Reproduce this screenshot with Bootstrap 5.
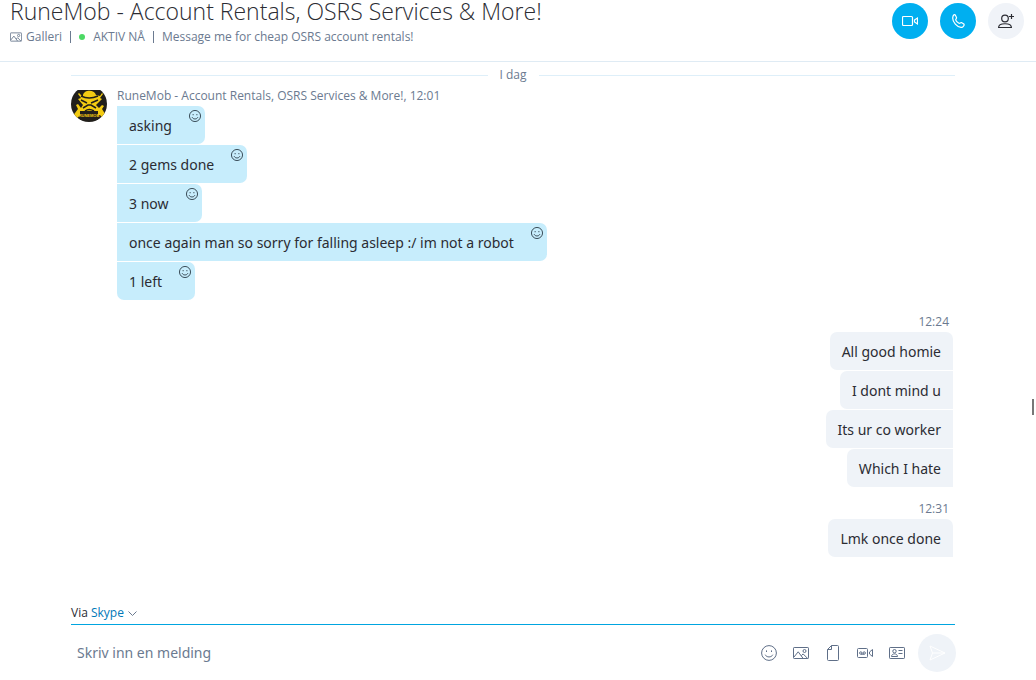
<!DOCTYPE html>
<html lang="nb">
<head>
<meta charset="utf-8">
<meta name="viewport" content="width=device-width, initial-scale=1">
<title>RuneMob - Skype</title>
<link rel="stylesheet" href="https://cdn.jsdelivr.net/npm/bootstrap@5.3.0/dist/css/bootstrap.min.css">
<style>
  body { font-family: "Noto Sans", "Open Sans", sans-serif; font-size: 14px; line-height: 20px; color: #2b2c33; background: #fff; }
  svg { display: block; fill: none; stroke: currentColor; }
  .muted { color: #6b7a90; }
  .meta { font-family: "Open Sans", sans-serif; font-size: 12px; line-height: 16px; }
  .topbar { height: 62px; border-bottom: 1px solid #dfebf4; padding: 0 12px 0 10px; }
  .chat-title { font-family: "Open Sans", sans-serif; font-size: 23px; line-height: 22px; font-weight: 300; margin: 0 0 7px; }
  .bar { width: 1px; height: 12px; margin: 0 8px; background: #6b7a90; }
  .online { width: 6px; height: 6px; background: #4cd964; }
  .calls { gap: 12px; padding-top: 3px; }
  .round-btn { width: 36px; height: 36px; border: 0; padding: 0; border-radius: 50%; background: #00aff0; color: #fff; display: grid; place-items: center; }
  .round-btn.pale { background: #f0f3f8; color: #2b2c33; }
  .column { margin: 0 81px 0 71px; }
  .day-row { margin-top: 5px; }
  .day-label { margin: 0 12px; }
  .day-line { height: 1px; background: #deeff9; }
  .incoming { margin-top: 3px; }
  .avatar { width: 36px; height: 36px; margin-right: 10px; }
  .author { padding: 2px 0; }
  .bubble { min-height: 38px; padding: 10px 12px 8px; position: relative; }
  .incoming .bubble { background: #c7edfc; padding-right: 33px; border-radius: 0 7px 7px 0; }
  .incoming .bubble:last-child { border-bottom-left-radius: 7px; }
  .outgoing { margin: 14px 2px 0 0; }
  .outgoing .meta { padding: 0 4px 2px 0; }
  .outgoing .bubble { background: #eff3f8; border-radius: 7px 0 0 7px; }
  .outgoing .bubble:first-child { border-top-right-radius: 7px; }
  .react { position: absolute; top: 4px; right: 4px; border: 0; padding: 0; background: none; color: #2b3c47; }
  .stack { gap: 1px; }
  .via { height: 24px; padding-top: 4px; border-bottom: 1px solid #00a5e0; }
  .via a { color: #0078b8; }
  .compose { height: 55px; }
  .compose input { border: 0; outline: 0; padding: 0 6px; background: none; min-width: 0; color: #2b2c33; }
  .compose input::placeholder { color: #6b7a90; opacity: 1; }
  .tool { width: 16px; border: 0; background: none; padding: 0; color: #5f6f88; }
  .tools { gap: 16px; }
  .send { width: 38px; height: 38px; background: #eff3f8; margin: 0 -1px 0 -3px; }
  .scroll-mark { position: absolute; right: 0; top: 399px; width: 4px; height: 16px; border-left: 2px solid #777; }
</style>
</head>
<body>
<svg class="d-none" aria-hidden="true">
  <symbol id="smile" viewBox="0 0 16 16"><circle cx="8" cy="8" r="7.4"/><path d="M5.5 5.4v1.6M10.5 5.4v1.6M4.2 9.7c1.3 3 6.3 3 7.6 0"/></symbol>
  <symbol id="picture" viewBox="0 0 16 14"><rect x=".5" y="1.5" width="15" height="11" rx=".7"/><path d="M1 11l4.2-5.2 5 6.7M8.3 9.7l1.8-1.8 4.6 4.6"/><circle cx="11.5" cy="5" r="1.5"/></symbol>
</svg>
<main class="vh-100 d-flex flex-column overflow-hidden position-relative">
  <header class="topbar d-flex justify-content-between flex-shrink-0">
    <div>
      <h1 class="chat-title text-nowrap">RuneMob - Account Rentals, OSRS Services &amp; More!</h1>
      <div class="meta muted d-flex align-items-center text-nowrap">
        <svg class="me-1" width="12" height="12" viewBox="0 0 16 14" stroke-width="1.2"><use href="#picture"/></svg>
        <a href="#" class="muted text-decoration-none">Galleri</a>
        <span class="bar"></span><span class="online rounded-circle me-2"></span>
        <span>AKTIV NÅ</span><span class="bar"></span>
        <span>Message me for cheap OSRS account rentals!</span>
      </div>
    </div>
    <div class="calls d-flex">
      <button class="round-btn" aria-label="Videosamtale"><svg width="16" height="12" viewBox="0 0 16 12" stroke-width="1.2"><rect x=".5" y="1.5" width="10" height="9" rx="1"/><path d="M12.5 5l3-2v6l-3-2z"/></svg></button>
      <button class="round-btn" aria-label="Lydsamtale"><svg width="14" height="14" viewBox="0 0 14 14" stroke-width="1.2"><path d="M2 2.300C2.300 1 3.500.200 4.300 1l1.200 2.500c.3.900-.8 1.400-.8 2.100.2 1.400 2.200 3.500 3.600 3.700.8 0 1.300-1 2.100-.7L12.800 10c.8.800 0 2.400-1.300 3.100C6.500 14.500.500 7.500 2 2.300z"/></svg></button>
      <button class="round-btn pale" aria-label="Legg til personer"><svg width="16" height="16" viewBox="0 0 16 16" stroke-width="1.2"><circle cx="7" cy="5.500" r="3.300"/><path d="M.6 14.500c0-5 12.800-5 12.800 0zM13.500 1v5M11 3.500h5"/></svg></button>
    </div>
  </header>

  <section class="column flex-grow-1 overflow-hidden" aria-label="Meldinger">
    <div class="day-row d-flex align-items-center meta muted">
      <span class="day-line flex-fill"></span><span class="day-label">I dag</span><span class="day-line flex-fill"></span>
    </div>
    <div class="incoming d-flex align-items-start">
      <svg class="avatar flex-shrink-0" viewBox="0 0 36 36" stroke="none" role="img" aria-label="RuneMob">
        <clipPath id="face"><circle cx="18" cy="18" r="18"/></clipPath>
        <g clip-path="url(#face)" stroke="none"><path fill="#211f1b" d="M0 4h36v32H0z"/>
        <path fill="#f3cb12" d="M12 9c1-5 11-6 13 0l4 1 2-3 1 1-3 4 2 1-4 4-2 2 3 3 3-3 2 1-2 3 5 8-2 4-5-6H9l-5 6-3-4 6-8-2-4 2-1 3 4 2-3-5-6 3-1-3-4 1-1 4 4z"/>
        <path d="M10 10q8 4 17 0M10 14l6 3M27 14l-7 3M12 22l5-3h3l5 3M14 25q4-3 9 0" fill="none" stroke="#211f1b" stroke-width="1.500"/>
        <path fill="#211f1b" d="M9 25h18v9H9z"/>
        <text x="18" y="31" text-anchor="middle" font-family="Liberation Sans" font-weight="700" font-size="4" fill="#f3cb12">RUNEMOB</text></g>
      </svg>
      <div>
        <div class="author meta muted text-nowrap">RuneMob - Account Rentals, OSRS Services &amp; More!, 12:01</div>
        <div class="stack d-flex flex-column align-items-start">
          <div class="bubble">asking<button class="react" aria-label="Reager"><svg width="12" height="12" stroke-width="1.200"><use href="#smile"/></svg></button></div>
          <div class="bubble">2 gems done<button class="react" aria-label="Reager"><svg width="12" height="12" stroke-width="1.200"><use href="#smile"/></svg></button></div>
          <div class="bubble">3 now<button class="react" aria-label="Reager"><svg width="12" height="12" stroke-width="1.200"><use href="#smile"/></svg></button></div>
          <div class="bubble">once again man so sorry for falling asleep :/ im not a robot<button class="react" aria-label="Reager"><svg width="12" height="12" stroke-width="1.200"><use href="#smile"/></svg></button></div>
          <div class="bubble">1 left<button class="react" aria-label="Reager"><svg width="12" height="12" stroke-width="1.200"><use href="#smile"/></svg></button></div>
        </div>
      </div>
    </div>
    <div class="outgoing text-end">
      <div class="meta muted">12:24</div>
      <div class="stack d-flex flex-column align-items-end">
        <div class="bubble">All good homie</div><div class="bubble">I dont mind u</div><div class="bubble">Its ur co worker</div><div class="bubble">Which I hate</div>
      </div>
    </div>
    <div class="outgoing text-end">
      <div class="meta muted">12:31</div>
      <div class="stack d-flex flex-column align-items-end"><div class="bubble">Lmk once done</div></div>
    </div>
  </section>

  <form class="column flex-shrink-0">
    <div class="via meta d-flex">Via&nbsp;<a href="#" class="text-decoration-none d-flex">Skype<svg class="muted ms-1 mt-1" width="9" height="9" viewBox="0 0 9 9"><path d="M.5 2.500l4 4 4-4"/></svg></a></div>
    <div class="compose d-flex align-items-center">
      <input class="flex-fill" type="text" placeholder="Skriv inn en melding" aria-label="Skriv inn en melding">
      <div class="tools d-flex align-items-center">
        <button type="button" class="tool" aria-label="Uttrykksikoner"><svg width="16" height="16"><use href="#smile"/></svg></button>
        <button type="button" class="tool" aria-label="Bilde"><svg width="16" height="14"><use href="#picture"/></svg></button>
        <button type="button" class="tool" aria-label="Fil"><svg width="16" height="16" viewBox="0 0 16 16"><path d="M6.500.500h6q1 0 1 1v13q0 1-1 1h-9q-1 0-1-1V4.500zv4h-4"/></svg></button>
        <button type="button" class="tool" aria-label="Videomelding"><svg width="16" height="16" viewBox="0 0 16 16"><rect x=".5" y="3.500" width="10" height="9" rx="1"/><circle cx="3.800" cy="8" r="1.200"/><circle cx="7.200" cy="8" r="1.200"/><path d="M4 9.200h3.200M12.500 7l3-2.500v7l-3-2.500z"/></svg></button>
        <button type="button" class="tool" aria-label="Kontakt"><svg width="16" height="14" viewBox="0 0 16 14"><rect x=".5" y="1.500" width="15" height="11" rx=".7"/><circle cx="5.500" cy="5.200" r="1.700"/><path d="M2.500 10.500c0-3.500 6-3.500 6 0zM9.500 4.500h4M9.500 7.500h4"/></svg></button>
        <button class="round-btn send" aria-label="Send"><svg width="17" height="16" viewBox="0 0 17 16"><path d="M1 1l15 7-15 7 2.500-7zM3.500 8H16"/></svg></button>
      </div>
    </div>
  </form>
  <span class="scroll-mark"></span>
</main>
<script src="https://cdn.jsdelivr.net/npm/bootstrap@5.3.0/dist/js/bootstrap.bundle.min.js"></script>
</body>
</html>
